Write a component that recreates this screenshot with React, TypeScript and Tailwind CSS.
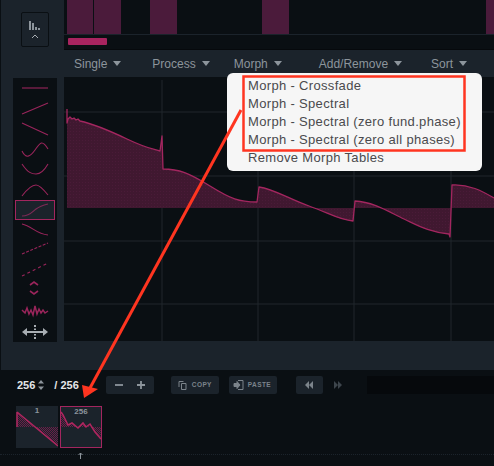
const TOOLS = [
  <path d="M4 10H30" />,
  <path d="M4 16 30 5" />,
  <path d="M4 4 30 16" />,
  <path d="M4 12C8 20 12 18 17 11S24 0 30 10" />,
  <path d="M4 5C10 14 14 15 18 15S26 12 30 5" />,
  <path d="M4 16C10 8 14 5 18 5S26 10 30 15" />,
  null,
  <path d="M4 4C14 6 18 14 30 15" />,
  <path d="M4 13 30 2" strokeDasharray="3 1.5" />,
  <path d="M4 15 30 2" strokeDasharray="3 3" />,
  <path d="M12 4 16 1 20 4M12 10 16 13 20 10" strokeWidth="1.6" />,
  <path d="M4 7 7 10 9 5 11 11 13 7 15 12 17 3 19 11 21 6 23 10 25 7 27 10 30 8" strokeWidth="1.5" transform="translate(0 1)" />,
];

function Tool({ i }: { i: number }) {
  return (
    <svg width="34" height="20" viewBox="0 0 34 20" className="overflow-visible" fill="none" stroke="#9a255b" strokeWidth="1.1">
      {TOOLS[i]}
    </svg>
  );
}

function Tri() {
  return <span className="ml-[6px] h-0 w-0 border-x-[4px] border-t-[5px] border-x-transparent border-t-[#8d959c]" />;
}

function MenuItem({ label, className }: { label: string; className: string }) {
  return (
    <div className={"flex items-center " + className}>
      {label}
      <Tri />
    </div>
  );
}

const WAVE =
  "M3 32V46L4 42 6 40 8 42 10 41 12 43 14 42 16 44C30 47 44 53 63 62S85 71 96 74L98 59 99 92C115 92 125 96 146 109S175 125 193 125L195 110C210 112 225 122 245 129S275 143 289 144L291 124C310 125 325 135 340 142S365 155 385 157L386 160 388 108C405 107 418 114 430 121";

function Waveform() {
  return (
    <svg width="430" height="264" viewBox="0 0 430 264" className="block">
      <defs>
        <pattern id="dots" width="3" height="3" patternUnits="userSpaceOnUse">
          <rect width="3" height="3" fill="#401830" />
          <rect width="1" height="1" fill="#4a1b38" />
        </pattern>
      </defs>
      <path d="M98 3V264M194 3V264M290 3V264M387 3V264M0 35H430M0 99H430M0 164H430M0 227H430" stroke="#20272d" />
      <path d={WAVE + "V131H3Z"} fill="url(#dots)" />
      <path d={WAVE} fill="none" stroke="#a3265f" strokeWidth="1.3" strokeLinejoin="round" />
    </svg>
  );
}

function Thumb({ label, active, line, fill }: { label: string; active?: boolean; line: string; fill: string }) {
  const id = "thumb" + label;
  return (
    <div className={"relative h-[42px] w-[42px] bg-[#1b232b] " + (active ? "border border-[#a3265f]" : "")}>
      <svg width="42" height="42" viewBox="0 0 42 42" className="absolute left-0 top-0" fill="none">
        <defs>
          <pattern id={id} width="2" height="2" patternUnits="userSpaceOnUse">
            <rect width="1" height="1" fill="#6a1f48" />
            <rect x="1" y="1" width="1" height="1" fill="#6a1f48" />
          </pattern>
        </defs>
        <path d={fill} fill={"url(#" + id + ")"} />
        <path d={line} stroke="#b0265f" strokeWidth="1.5" />
      </svg>
      <div className="absolute inset-x-0 top-0 text-center text-[8px] font-bold leading-[10px] text-[#8d959c]">{label}</div>
    </div>
  );
}

export default function App() {
  return (
    <div className="relative flex h-[466px] w-[494px] flex-col overflow-hidden bg-[#1b232b] font-['Liberation_Sans',sans-serif]">
      <div className="flex h-[370px] border-l border-l-[#0a0f13] pl-px">
        {/* left column */}
        <div className="flex w-[62px] flex-col">
          <div className="ml-[19px] mt-[12px] flex h-[35px] w-[28px] flex-col items-center rounded-[2px] border border-[#0a0f13]">
            <svg width="14" height="20" viewBox="0 0 14 20" className="mt-[6px]" fill="#8d959c">
              <rect x="1" y="2" width="2" height="9" />
              <rect x="4" y="4" width="2" height="7" />
              <rect x="7" y="8" width="2" height="3" />
              <rect x="10" y="9" width="2" height="2" />
              <path d="M4 19 7 16 10 19" fill="none" stroke="#a8aeb3" />
            </svg>
          </div>
          <div className="ml-[11px] mt-[31px] grid h-[264px] w-[44px] grid-rows-[repeat(13,1fr)] bg-[#0a0f13]">
            {TOOLS.map((_, i) =>
              i === 6 ? (
                <div key={i} className="flex items-center justify-center">
                  <div className="mx-[2px] flex h-[20px] flex-1 items-center justify-center border border-[#a3265f] bg-[#1b232b]">
                    <svg width="30" height="16" viewBox="0 0 30 16" fill="none" stroke="#7d2a55" strokeWidth="1.2">
                      <path d="M2 14C10 14 12 10 16 7S24 3 28 2" />
                    </svg>
                  </div>
                </div>
              ) : (
                <div key={i} className="flex items-center justify-center">
                  <Tool i={i} />
                </div>
              ),
            )}
            <div className="flex items-center justify-center">
              <svg width="26" height="14" viewBox="0 0 26 14" fill="#a8aeb3">
                <path d="M0 7 5 3V6H21V3L26 7 21 11V8H5V11Z" />
                <path d="M12 0H14V2H12ZM12 3.500H14V5H12ZM12 9H14V10.500H12ZM12 12H14V14H12Z" />
              </svg>
            </div>
          </div>
        </div>
        {/* right column */}
        <div className="flex w-[430px] flex-col">
          <div className="h-[50px] border-b border-b-[#06090c] bg-[#0a0f13]">
            <div className="flex h-[34px]">
              <div className="ml-[3px] h-full w-[26px] bg-[#4b1b3b]" />
              <div className="ml-px h-full w-[27px] bg-[#4b1b3b]" />
              <div className="ml-[29px] h-full w-[27px] bg-[#4b1b3b]" />
              <div className="ml-[85px] h-full w-[27px] bg-[#4b1b3b]" />
              <div className="ml-[197px] h-full w-[8px] bg-[#4b1b3b]" />
            </div>
            <div className="h-[15px] border-t border-t-[#1b232b] pl-[4px] pt-[3px]">
              <div className="h-[7px] w-[39px] rounded-[1px] bg-[#a8245f]" />
            </div>
          </div>
          <div className="flex h-[27px] items-center text-[12px] text-[#8d959c]">
            <MenuItem label="Single" className="ml-[10px]" />
            <MenuItem label="Process" className="ml-[31px]" />
            <MenuItem label="Morph" className="ml-[24px]" />
            <MenuItem label="Add/Remove" className="ml-[37px]" />
            <MenuItem label="Sort" className="ml-[29px]" />
          </div>
          <div className="h-[264px] bg-[#0a0f13]">
            <Waveform />
          </div>
        </div>
      </div>

      {/* bottom section */}
      <div className="flex-1 bg-[#0a0f13]">
        <div className="flex h-[36px] items-center pb-[12px] pt-[6px] text-[11px] font-bold text-[#e4e6e8]">
          <span className="ml-[17px]">256</span>
          <svg width="6" height="10" viewBox="0 0 6 10" className="ml-[3px]" fill="#8d959c">
            <path d="M3 0 6 3.500H0ZM3 10 0 6.500H6Z" />
          </svg>
          <span className="ml-[10px]">/ 256</span>
          <div className="ml-[27px] flex h-[18px] w-[48px] items-center justify-around rounded-[2px] bg-[#1b232b] px-[2px] text-[#8d959c]">
            <svg width="10" height="10" viewBox="0 0 10 10" stroke="currentColor" strokeWidth="1.8"><path d="M1 5H9" /></svg>
            <svg width="10" height="10" viewBox="0 0 10 10" stroke="currentColor" strokeWidth="1.8"><path d="M1 5H9M5 1V9" /></svg>
          </div>
          <div className="ml-[17px] flex h-[18px] w-[48px] items-center rounded-[2px] bg-[#1b232b] pl-[7px] text-[6.500px] tracking-[0.4px] text-[#7c848b]">
            <svg width="9" height="10" viewBox="0 0 9 10" fill="none" stroke="#7c848b" className="mr-[5px]">
              <path d="M5.500 1.500H1V7M3.500 3.500H8V9.500H3.500Z" />
            </svg>
            COPY
          </div>
          <div className="ml-[10px] flex h-[18px] w-[48px] items-center rounded-[2px] bg-[#1b232b] pl-[4px] text-[6.500px] tracking-[0.4px] text-[#7c848b]">
            <svg width="11" height="10" viewBox="0 0 11 10" fill="none" stroke="#7c848b" className="mr-[4px]">
              <path d="M5 .5H10V9.500H5" />
              <path d="M1 3.500H4V1.500L7 5 4 8.500V6.500H1Z" fill="#7c848b" />
            </svg>
            PASTE
          </div>
          <div className="ml-[19px] flex h-[18px] w-[27px] items-center justify-center rounded-[2px] bg-[#1b232b]">
            <svg width="9" height="8" viewBox="0 0 9 8" fill="#7c848b"><path d="M4 0V8L0 4ZM8 0V8L4 4Z" /></svg>
          </div>
          <svg width="9" height="8" viewBox="0 0 9 8" className="ml-[10px]" fill="#3d454c"><path d="M1 0V8L5 4ZM5 0V8L9 4Z" /></svg>
          <div className="ml-[25px] h-[18px] flex-1 bg-[#06090c]" />
        </div>
        <div className="ml-[16px] flex gap-[2px]">
          <Thumb label="1" line="M1 6V21M1 6 42 40" fill="M1 6V21H19ZM19 21H42V40Z" />
          <Thumb
            label="256"
            active
            line="M0 5 2 8 7 18 11 16 17 21 22 16 25 20 29 17 34 25 40 32"
            fill="M0 5V20H16L11 16 7 18ZM22 16 17 20H29ZM30 20H40V30L34 25Z"
          />
        </div>
        <div className="relative mt-[6px] border-t border-dotted border-t-[#1b232b]">
          <svg width="5" height="7" viewBox="0 0 5 7" className="absolute left-[78px] top-[-3px]" fill="none" stroke="#8d959c">
            <path d="M2.500 7V1M.5 3 2.500 1 4.500 3" />
          </svg>
        </div>
      </div>

      {/* popup menu */}
      <div className="absolute left-[227px] top-[73px] h-[98px] w-[255px] rounded-[6px] bg-[#f6f6f6] pl-[21px] pt-[4px] text-[13px] leading-[18px] tracking-[0.33px] text-[#4a4a4d]">
        <div>Morph - Crossfade</div>
        <div>Morph - Spectral</div>
        <div>Morph - Spectral (zero fund.phase)</div>
        <div>Morph - Spectral (zero all phases)</div>
        <div>Remove Morph Tables</div>
      </div>

      {/* annotation drawn over the screenshot */}
      <svg width="494" height="466" viewBox="0 0 494 466" className="pointer-events-none absolute left-0 top-0" fill="none">
        <rect x="243.500" y="76.500" width="221" height="74" stroke="#ff3520" strokeWidth="2.500" />
        <path d="M241 110 90 388" stroke="#ff3520" strokeWidth="3" />
        <path d="M84 398 82 385 98 389Z" fill="#ff3520" />
      </svg>
    </div>
  );
}
